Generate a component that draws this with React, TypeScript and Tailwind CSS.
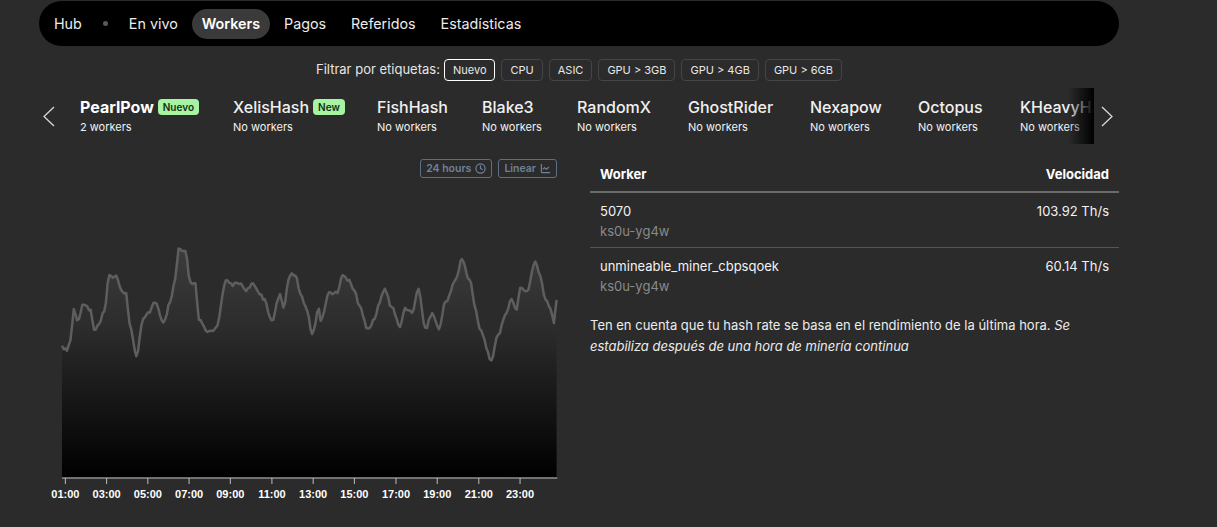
import { Clock, ChartLine } from "lucide-react";

const NAV = ["Hub", "•", "En vivo", "Workers", "Pagos", "Referidos", "Estadísticas"];
const TAGS = ["Nuevo", "CPU", "ASIC", "GPU > 3GB", "GPU > 4GB", "GPU > 6GB"];

const ALGOS = [
  { name: "PearlPow", sub: "2 workers", badge: "Nuevo", w: "w-[153px]", active: true },
  { name: "XelisHash", sub: "No workers", badge: "New", w: "w-[144px]" },
  { name: "FishHash", sub: "No workers", w: "w-[105px]" },
  { name: "Blake3", sub: "No workers", w: "w-[95px]" },
  { name: "RandomX", sub: "No workers", w: "w-[111px]" },
  { name: "GhostRider", sub: "No workers", w: "w-[122px]" },
  { name: "Nexapow", sub: "No workers", w: "w-[108px]" },
  { name: "Octopus", sub: "No workers", w: "w-[102px]" },
  { name: "KHeavyHash", sub: "No workers", w: "w-[130px]" },
];

const WORKERS = [
  { name: "5070", id: "ks0u-yg4w", speed: "103.92 Th/s" },
  { name: "unmineable_miner_cbpsqoek", id: "ks0u-yg4w", speed: "60.14 Th/s" },
];

// rough shape of the hashrate line (crop coords, scale ~2.958)
const KP: [number, number][] = [
  [65, 320], [80, 330], [90, 300], [100, 210], [110, 240], [130, 190], [150, 210], [160, 270],
  [175, 250], [190, 215], [205, 110], [225, 110], [240, 150], [255, 160], [265, 250], [285, 345],
  [305, 240], [320, 220], [340, 185], [365, 250], [385, 190], [400, 120], [410, 30], [430, 40],
  [445, 130], [460, 135], [470, 240], [495, 275], [520, 265], [550, 125], [570, 135], [590, 130],
  [610, 150], [630, 135], [650, 160], [665, 180], [685, 245], [710, 165], [720, 200], [740, 105],
  [755, 105], [770, 160], [790, 210], [805, 280], [825, 210], [830, 240], [855, 160], [880, 160],
  [895, 105], [915, 125], [930, 150], [945, 200], [970, 265], [990, 240], [1000, 195], [1020, 150],
  [1040, 200], [1065, 260], [1080, 205], [1100, 215], [1120, 150], [1140, 265], [1160, 220],
  [1180, 265], [1200, 185], [1230, 120], [1248, 60], [1270, 120], [1290, 210], [1300, 265],
  [1335, 355], [1355, 285], [1380, 215], [1395, 180], [1410, 210], [1420, 145], [1440, 155],
  [1465, 70], [1480, 110], [1495, 180], [1510, 205], [1520, 245], [1528, 180],
];

const S = 2.958;

function noise(i: number) {
  const v = Math.sin(i * 12.9898) * 43758.5453;
  return v - Math.floor(v) - 0.5;
}

function buildLine() {
  const pts: [number, number][] = [];
  let n = 0;
  for (let k = 0; k < KP.length - 1; k++) {
    const [x0, y0] = KP[k];
    const [x1, y1] = KP[k + 1];
    const steps = Math.max(1, Math.ceil((x1 - x0) / 5));
    for (let s = 0; s < steps; s++) {
      const t = s / steps;
      const e = (1 - Math.cos(Math.PI * t)) / 2;
      const y = y0 + (y1 - y0) * e + noise(n++) * 9;
      pts.push([(x0 + (x1 - x0) * t) / S, y / S]);
    }
  }
  const last = KP[KP.length - 1];
  pts.push([last[0] / S, last[1] / S]);
  return pts;
}

const TICKS = [75, 197, 319, 441, 563, 686, 808, 930, 1053, 1175, 1298, 1420];

function Chart() {
  const pts = buildLine();
  const line = pts.map((p, i) => `${i ? "L" : "M"}${p[0].toFixed(1)},${p[1].toFixed(1)}`).join(" ");
  const base = 705 / S;
  const area = `${line} L${pts[pts.length - 1][0].toFixed(1)},${base} L${pts[0][0].toFixed(1)},${base} Z`;
  return (
    <svg width="530" height="270" viewBox="0 0 530 270" className="block">
      <defs>
        <linearGradient id="fill" x1="0" y1="8" x2="0" y2="238" gradientUnits="userSpaceOnUse">
          <stop offset="0" stopColor="#3c3c3c" />
          <stop offset="0.35" stopColor="#2c2c2c" />
          <stop offset="1" stopColor="#000" />
        </linearGradient>
      </defs>
      <path d={area} fill="url(#fill)" />
      <path d={line} fill="none" stroke="#5e5e5e" strokeWidth="2.5" strokeLinejoin="round" />
      <line x1={65 / S} x2={1530 / S} y1={239} y2={239} stroke="#bdbdbd" strokeWidth="1" />
      {TICKS.map((t, i) => (
        <g key={t}>
          <line x1={t / S} x2={t / S} y1={239} y2={245} stroke="#bdbdbd" strokeWidth="1" />
          <text
            x={t / S}
            y={259}
            textAnchor="middle"
            fill="#fff"
            fontSize="11"
            fontWeight="bold"
            fontFamily="'Liberation Sans', Arial, sans-serif"
          >
            {`${String(i * 2 + 1).padStart(2, "0")}:00`}
          </text>
        </g>
      ))}
    </svg>
  );
}

function Chevron({ left }: { left?: boolean }) {
  return (
    <svg width="12" height="21" viewBox="0 0 12 21" className="block">
      <polyline
        points={left ? "11,1 1,10.5 11,20" : "1,1 11,10.5 1,20"}
        fill="none"
        stroke="#d8d8d8"
        strokeWidth="1.3"
      />
    </svg>
  );
}

export default function App() {
  return (
    <div className="min-h-screen bg-[#2b2b2b] text-white font-['Inter',sans-serif]">
      <div className="w-[1080px] ml-[39px] pt-px">
        {/* top nav */}
        <nav className="h-[45px] rounded-full bg-black flex items-center pl-[4px] gap-[3px]">
          {NAV.map((item) =>
            item === "•" ? (
              <div key={item} className="px-[7px] flex items-center">
                <span className="w-[5px] h-[5px] rounded-full bg-[#5a5a5a]" />
              </div>
            ) : (
              <div
                key={item}
                className={`h-[30px] flex items-center rounded-full text-[14.3px] ${
                  item === "Workers" ? "px-[10px] bg-[#3a3a3a] font-semibold text-white" : "px-[11px] text-[#ececec]"
                }`}
              >
                {item}
              </div>
            )
          )}
        </nav>

        {/* tag filter */}
        <div className="mt-[13px] flex items-center justify-center gap-[6px]">
          <span className="text-[13px] text-[#e6e6e6] mr-[-2px]">Filtrar por etiquetas:</span>
          {TAGS.map((t, i) => (
            <button
              key={t}
              className={`h-[22px] px-[8px] rounded-[4px] border text-[11px] text-[#e8e8e8] ${
                i === 0 ? "border-white" : "border-[#454545]"
              }`}
            >
              {t}
            </button>
          ))}
        </div>

        {/* algorithm slider */}
        <div className="mt-[7px] flex items-center h-[56px]">
          <button className="w-[20px] flex justify-center">
            <Chevron left />
          </button>
          <div className="relative w-[1035px] h-full overflow-hidden">
            <div className="flex h-full items-center pl-[21px] whitespace-nowrap">
              {ALGOS.map((a) => (
                <div key={a.name} className={`${a.w} shrink-0`}>
                  <div className="flex items-center gap-[4px] h-[22px]">
                    <span className={`text-[16px] ${a.active ? "font-bold text-white" : "font-medium text-[#f0f0f0]"}`}>
                      {a.name}
                    </span>
                    {a.badge && (
                      <span className="h-[16px] px-[5px] rounded-[4px] bg-[#a6f3a3] text-[#143014] text-[10px] font-semibold leading-[16px]">
                        {a.badge}
                      </span>
                    )}
                  </div>
                  <div className="text-[11px] text-[#f2f2f2] mt-[-1px] leading-[20px]">{a.sub}</div>
                </div>
              ))}
            </div>
            <div className="absolute right-0 top-0 bottom-0 w-[26px] bg-gradient-to-r from-transparent to-black" />
          </div>
          <button className="w-[25px] flex justify-center">
            <Chevron />
          </button>
        </div>

        {/* content */}
        <div className="mt-[10px] flex gap-[20px]">
          <div className="w-[530px] ml-px">
            <div className="pt-[5px] flex justify-end gap-[6px] pr-[13px]">
              <span className="h-[19px] px-[5px] flex items-center gap-[4px] rounded-[3px] border border-[#5d6f84] text-[#6f8299] text-[10.5px] font-semibold">
                24 hours <Clock size={11} strokeWidth={2.6} />
              </span>
              <span className="h-[19px] px-[5px] flex items-center gap-[4px] rounded-[3px] border border-[#5d6f84] text-[#6f8299] text-[10.5px] font-semibold">
                Linear <ChartLine size={11} strokeWidth={2.6} />
              </span>
            </div>
            <div className="mt-[61px]">
              <Chart />
            </div>
          </div>

          <div className="w-[529px]">
            <div className="h-[39px] pt-[5px] flex items-center justify-between px-[10px] border-b-2 border-[#6a6a6a] text-[13px] font-bold">
              <span>Worker</span>
              <span>Velocidad</span>
            </div>
            {WORKERS.map((w, i) => (
              <div
                key={w.name}
                className={`flex justify-between px-[10px] pt-[8px] pb-[6px] text-[13px] leading-[20px] ${
                  i === 0 ? "border-b border-[#555]" : ""
                }`}
              >
                <div>
                  <div className="text-[#f2f2f2]">{w.name}</div>
                  <div className="text-[#8a8a8a]">{w.id}</div>
                </div>
                <div className="text-[#f2f2f2]">{w.speed}</div>
              </div>
            ))}
            <p className="mt-[13px] text-[13px] leading-[21px] text-[#ececec] pr-[10px]">
              Ten en cuenta que tu hash rate se basa en el rendimiento de la última hora.{" "}
              <em>Se estabiliza después de una hora de minería continua</em>
            </p>
          </div>
        </div>
      </div>
    </div>
  );
}
